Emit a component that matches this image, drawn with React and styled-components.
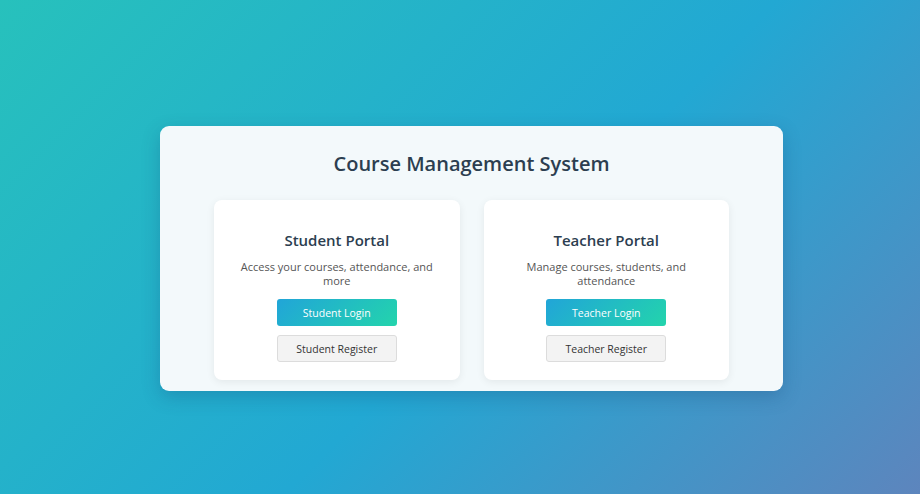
import React from 'react'
import styled, { createGlobalStyle } from 'styled-components'

const Global = createGlobalStyle`
  html, body { margin: 0; padding: 0; }
  body {
    font-family: "Open Sans", "Noto Sans", sans-serif;
  }
`

const Page = styled.div`
  width: 920px;
  height: 494px;
  background: linear-gradient(135deg, #27c1bc 0%, #22a8d3 55%, #5d85bd 100%);
  display: flex;
  align-items: flex-start;
  justify-content: center;
  padding: 126px 0 0 23px;
  box-sizing: border-box;
`

const Panel = styled.div`
  width: 623px;
  box-sizing: border-box;
  background: #f3f9fb;
  border-radius: 9px;
  box-shadow: 0 6px 18px rgba(20, 60, 110, 0.25);
  padding: 23px 54px 11px 54px;
  display: flex;
  flex-direction: column;
  align-items: center;
`

const Heading = styled.h1`
  margin: 0 0 21px 0;
  font-size: 20px;
  line-height: 30px;
  font-weight: 600;
  color: #2c3e50;
`

const Cards = styled.div`
  display: flex;
  gap: 24px;
  width: 100%;
`

const Card = styled.div`
  flex: 1;
  height: 180px;
  box-sizing: border-box;
  background: #ffffff;
  border-radius: 8px;
  box-shadow: 0 2px 8px rgba(0, 0, 0, 0.07);
  padding: 30px 20px 0 20px;
  display: flex;
  flex-direction: column;
  align-items: center;
`

const Title = styled.h3`
  margin: 0 0 10px 0;
  font-size: 15px;
  line-height: 20px;
  font-weight: 600;
  color: #2c3e50;
`

const Desc = styled.p`
  margin: 0 0 11px 0;
  max-width: ${p => p.$wrap}px;
  font-size: 11px;
  line-height: 14px;
  color: #555;
  text-align: center;
`

const Button = styled.button`
  width: 120px;
  height: 27px;
  box-sizing: border-box;
  border-radius: 3px;
  font-family: inherit;
  font-size: 10.5px;
  cursor: pointer;
  margin-bottom: 9px;
  border: ${p => (p.$primary ? 'none' : '1px solid #dcdcdc')};
  background: ${p => (p.$primary ? 'linear-gradient(135deg, #21a5d8 0%, #23d4ac 100%)' : '#f3f3f3')};
  color: ${p => (p.$primary ? '#ffffff' : '#333333')};
`

const portals = [
  { id: 0, title: 'Student Portal', desc: 'Access your courses, attendance, and more', wrap: 195, who: 'Student' },
  { id: 1, title: 'Teacher Portal', desc: 'Manage courses, students, and attendance', wrap: 170, who: 'Teacher' },
]

export default function App() {
  return (
    <>
      <Global />
      <Page>
        <Panel>
          <Heading>Course Management System</Heading>
          <Cards>
            {portals.map(p => (
              <Card key={p.id}>
                <Title>{p.title}</Title>
                <Desc $wrap={p.wrap}>{p.desc}</Desc>
                <Button $primary>{p.who} Login</Button>
                <Button>{p.who} Register</Button>
              </Card>
            ))}
          </Cards>
        </Panel>
      </Page>
    </>
  )
}
